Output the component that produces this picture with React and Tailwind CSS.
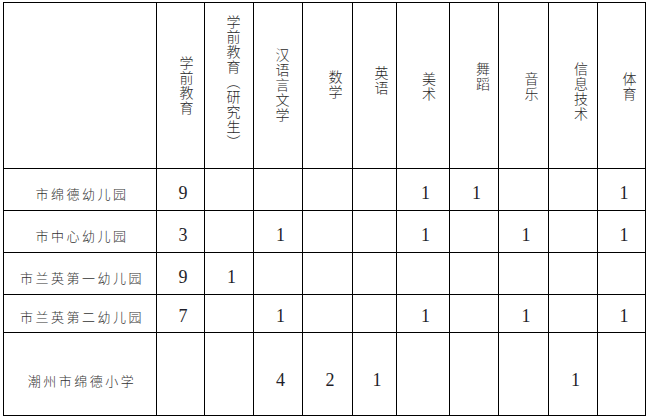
const heads = [
  { t: '学前教育', c: 'pl-[12px]' },
  { t: '学前教育（研究生）', c: 'pl-[9px] pb-[6px]' },
  { t: '汉语言文学', c: 'pl-[9px]' },
  { t: '数学', c: 'pl-[16px] pb-[2px]' },
  { t: '英语', c: 'pl-[14px] pb-[10px]' },
  { t: '美术', c: 'pl-[12px] pt-[2px]' },
  { t: '舞蹈', c: 'pl-[18px] pb-[18px]' },
  { t: '音乐', c: 'pl-[16px] pt-[2px]' },
  { t: '信息技术', c: 'pl-[16px] pt-[12px]' },
  { t: '体育', c: 'pl-[16px] pt-[2px]' },
]

const widths = [153, 48, 49, 49, 50, 44, 53, 49, 50, 49, 48]

const rows = [
  { name: '市绵德幼儿园', h: 'h-[42px]', p: 'pt-[6px]', v: ['9', '', '', '', '', '1', '1', '', '', '1'] },
  { name: '市中心幼儿园', h: 'h-[42px]', p: 'pt-[6px]', v: ['3', '', '1', '', '', '1', '', '1', '', '1'] },
  { name: '市兰英第一幼儿园', h: 'h-[42px]', p: 'pt-[6px]', v: ['9', '1', '', '', '', '', '', '', '', ''] },
  { name: '市兰英第二幼儿园', h: 'h-[38px]', p: 'pt-[4px]', v: ['7', '', '1', '', '', '1', '', '1', '', '1'] },
  { name: '潮州市绵德小学', h: 'h-[83px]', p: 'pt-[12px]', v: ['', '', '4', '2', '1', '', '', '', '1', ''] },
]

export default function App() {
  return (
    <div className="w-[649px] h-[418px] bg-white overflow-hidden pl-[3px] pt-[2px]">
      <table className="table-fixed border-collapse w-[643px]">
        <colgroup>
          {widths.map((w, i) => (
            <col key={i} style={{ width: w }} />
          ))}
        </colgroup>
        <tbody>
          <tr className="h-[166px]">
            <td className="border border-black p-0" />
            {heads.map((h) => (
              <td key={h.t} className="border border-black p-0 align-middle">
                <div className={`flex items-center justify-center ${h.c}`}>
                  <span className="[writing-mode:vertical-rl] text-[14px] tracking-[1px] leading-none text-[#2a2a2a] font-['Noto_Sans_CJK_SC',sans-serif] font-light">
                    {h.t}
                  </span>
                </div>
              </td>
            ))}
          </tr>
          {rows.map((r) => (
            <tr key={r.name} className={r.h}>
              <td className={`border border-black p-0 text-center align-middle ${r.p}`}>
                <span className="text-[13px] tracking-[2.5px] text-[#333] font-['Noto_Sans_CJK_SC',sans-serif] font-light pl-[4px]">
                  {r.name}
                </span>
              </td>
              {r.v.map((v, i) => (
                <td
                  key={i}
                  className={`border border-black p-0 pl-[5px] text-center align-middle text-[18px] leading-none text-[#1f1f2a] font-['Liberation_Serif',serif] ${r.p}`}
                >
                  {v}
                </td>
              ))}
            </tr>
          ))}
        </tbody>
      </table>
    </div>
  )
}
